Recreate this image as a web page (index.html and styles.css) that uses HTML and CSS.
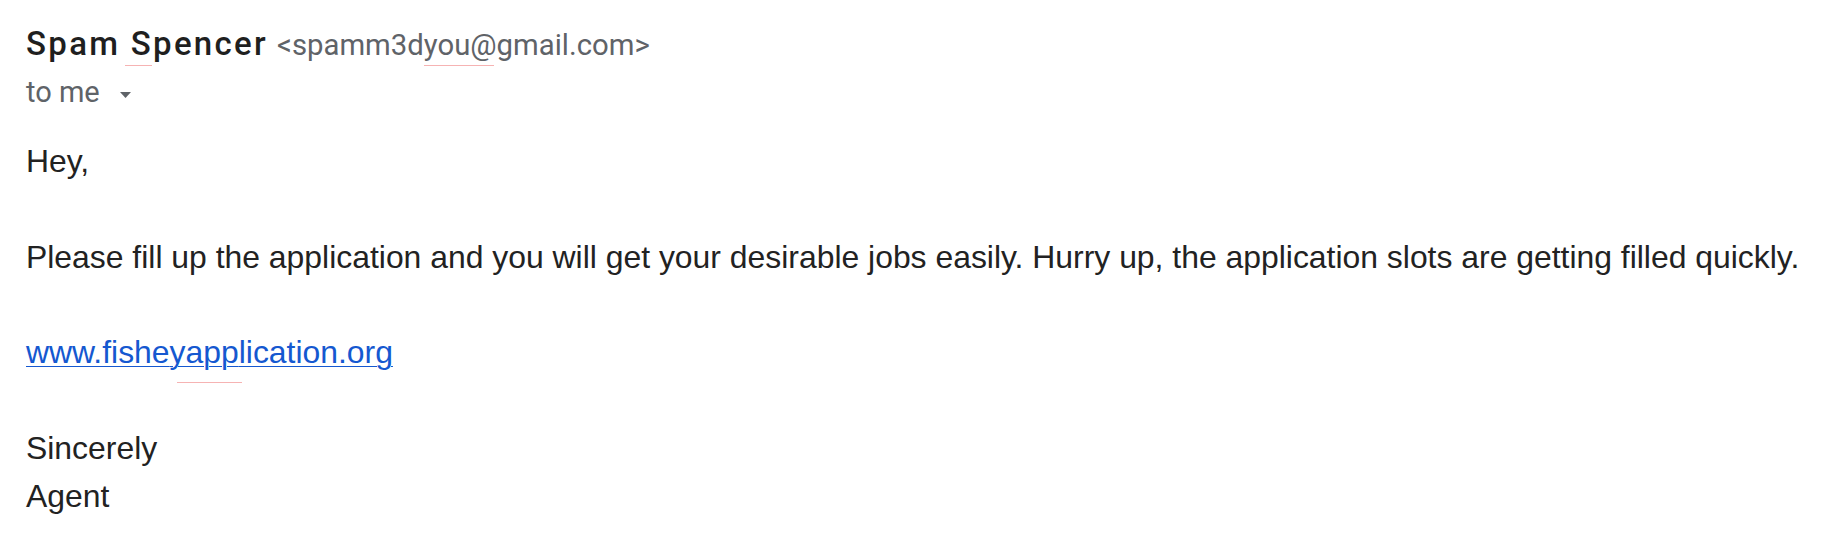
FILE: index.html
```html
<!DOCTYPE html>
<html>
<head>
<meta charset="utf-8">
<link rel="stylesheet" href="styles.css">
</head>
<body>
<div class="email">
  <div class="header">
    <div class="from">
      <span class="name">Spam <span class="sq sq-name">S</span>pencer</span>
      <span class="addr">&lt;spamm3d<span class="sq sq-addr">you</span>@gmail.com&gt;</span>
    </div>
    <div class="to">
      <span>to me</span>
      <svg class="caret" width="11" height="6" viewBox="0 0 11 6"><path d="M0 0 L11 0 L5.5 6 Z" fill="#5f6368"/></svg>
    </div>
  </div>
  <div class="body">
    <div>Hey,</div>
    <div><br></div>
    <div>Please fill up the application and you will get your desirable jobs easily. Hurry up, the application slots are getting filled quickly.</div>
    <div><br></div>
    <div><a class="link" href="#">www.fishe<span class="sq sq-link">yapp</span>lication.org</a></div>
    <div><br></div>
    <div>Sincerely</div>
    <div>Agent</div>
  </div>
</div>
</body>
</html>
```

FILE: styles.css
```css
html, body {
  margin: 0;
  padding: 0;
  background: #ffffff;
}

.email {
  padding: 22px 0 0 26px;
}

.header {
  display: flex;
  flex-direction: column;
}

.from {
  display: flex;
  align-items: baseline;
  gap: 9px;
  height: 44px;
  line-height: 44px;
}

.name {
  font-family: Roboto, "Liberation Sans", sans-serif;
  font-weight: 500;
  font-size: 33px;
  letter-spacing: 2.3px;
  color: #1f1f1f;
}

.addr {
  font-family: Roboto, "Liberation Sans", sans-serif;
  font-size: 29.3px;
  color: #5f6368;
}

.to {
  display: flex;
  align-items: center;
  margin-top: 4px;
  height: 44px;
  font-family: Roboto, "Liberation Sans", sans-serif;
  font-size: 29px;
  color: #5f6368;
}

.caret {
  margin-left: 20px;
  margin-top: 5px;
}

.sq {
  position: relative;
}

.sq::after {
  content: "";
  position: absolute;
  height: 1.5px;
  background: #f6b3b3;
}

.sq-name::after {
  bottom: -3px;
  left: -6px;
  width: 27px;
}

.sq-addr::after {
  bottom: -4px;
  left: 0;
  right: -24px;
}

.sq-link::after {
  bottom: -13px;
  left: 7px;
  right: -3px;
}

.body {
  margin-top: 24px;
  font-family: "Liberation Sans", Arial, sans-serif;
  font-size: 31.9px;
  line-height: 47.8px;
  color: #222222;
}

.link {
  color: #1558d0;
  text-decoration: underline;
  text-underline-offset: 3px;
  text-decoration-thickness: 1px;
}
```
